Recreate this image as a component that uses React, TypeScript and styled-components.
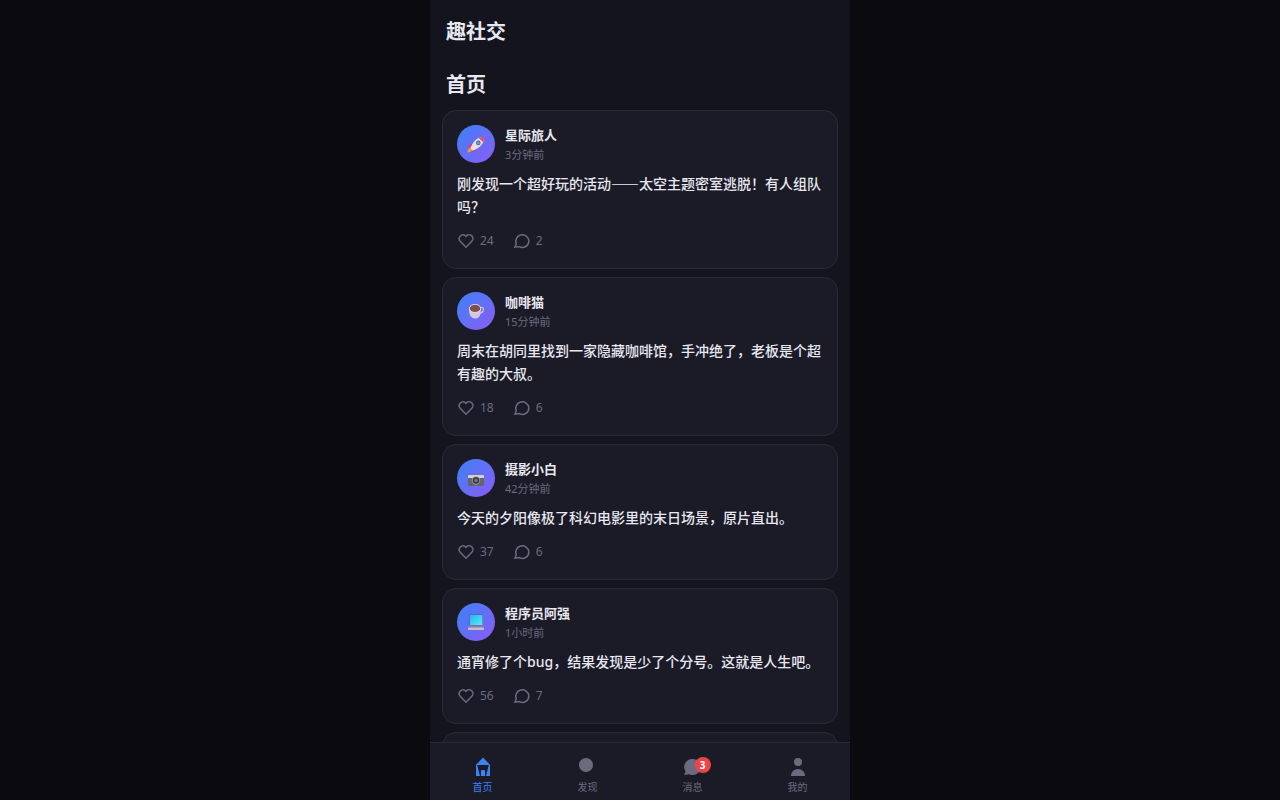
import React from 'react';
import styled, { createGlobalStyle } from 'styled-components';

const colors = {
  page: '#0a0a0f',
  shell: '#14141e',
  card: '#1b1a27',
  border: '#2a2a3a',
  text: '#e8e8f0',
  muted: '#6b6b80',
  accent: '#3b82f6',
  violet: '#8b5cf6',
  danger: '#ef4444',
};

const GlobalStyle = createGlobalStyle`
  *, *::before, *::after { box-sizing: border-box; }
  body {
    margin: 0;
    background: ${colors.page};
    color: ${colors.text};
    font-family: "Noto Sans", "Noto Sans CJK SC", sans-serif;
  }
  button { font: inherit; border: 0; background: none; cursor: pointer; }
`;

const Shell = styled.div`
  display: flex;
  flex-direction: column;
  width: 100%;
  max-width: 420px;
  height: 100vh;
  margin: 0 auto;
  background: ${colors.shell};
`;

const Header = styled.header`
  padding: 16px;
`;

const Brand = styled.h1`
  margin: 0;
  font-size: 20px;
  line-height: 32px;
  font-weight: 700;
`;

const Main = styled.main`
  flex: 1;
  min-height: 0;
  overflow-y: auto;
  scrollbar-width: none;
`;

const SectionTitle = styled.h2`
  margin: 0;
  padding: 5px 16px 9px;
  font-size: 20px;
  line-height: 32px;
  font-weight: 700;
`;

const Feed = styled.div`
  display: flex;
  flex-direction: column;
  gap: 8px;
  padding: 0 12px 12px;
`;

const Card = styled.article`
  min-height: 136px;
  padding: 14px;
  border: 1px solid ${colors.border};
  border-radius: 14px;
  background: ${colors.card};
`;

const CardHead = styled.div`
  display: flex;
  align-items: flex-start;
  gap: 10px;
  margin-bottom: 7px;
`;

const Avatar = styled.span`
  display: flex;
  align-items: center;
  justify-content: center;
  width: 38px;
  height: 38px;
  border-radius: 50%;
  background: linear-gradient(135deg, ${colors.accent}, ${colors.violet});
`;

const Author = styled.div`
  font-size: 13px;
  line-height: 20px;
  font-weight: 600;
`;

const Time = styled.div`
  font-size: 11px;
  line-height: 20px;
  color: ${colors.muted};
`;

/* Long dashes join up only when the CJK face comes first in the stack. */
const Content = styled.p<{ $cjkDashes: boolean }>`
  margin: 0;
  font-size: 14px;
  line-height: 23px;
  font-weight: 500;
  font-family: ${({ $cjkDashes }) =>
    $cjkDashes ? '"Noto Sans CJK SC", sans-serif' : 'inherit'};
`;

const Actions = styled.div`
  display: flex;
  gap: 19px;
  margin-top: 10px;
  padding-bottom: 1px;
`;

const Action = styled.button`
  display: flex;
  align-items: center;
  gap: 5px;
  padding: 4px 0;
  color: ${colors.muted};
  && { font-size: 12px; line-height: 17px; }

  svg { flex: none; margin: -1px 0; }
`;

const Nav = styled.nav`
  display: flex;
  height: 58px;
  border-top: 1px solid ${colors.border};
  background: ${colors.card};
`;

const NavItem = styled.button<{ $active?: boolean }>`
  flex: 1;
  display: flex;
  flex-direction: column;
  align-items: center;
  justify-content: center;
  gap: 1px;
  padding: 7px 0 0;
  color: ${({ $active }) => ($active ? colors.accent : colors.muted)};
  && { font-size: 10px; line-height: 16px; }
`;

const NavIcon = styled.span`
  position: relative;
  display: flex;
`;

const Badge = styled.span`
  position: absolute;
  top: 1px;
  right: -7px;
  width: 16px;
  height: 16px;
  border-radius: 50%;
  background: ${colors.danger};
  color: #fff;
  font-size: 10px;
  line-height: 16px;
  font-weight: 700;
  text-align: center;
`;

const HeartIcon = () => (
  <svg width="18" height="18" viewBox="0 0 24 24" fill="none" stroke="currentColor" strokeWidth="2" aria-hidden="true">
    <path d="M19.700 5.200a5.100 5.100 0 0 0-7.200 0L12 5.800l-.5-.6a5.100 5.100 0 0 0-7.200 7.200L12 20.300l7.700-7.900a5.100 5.100 0 0 0 0-7.200z" />
  </svg>
);

const CommentIcon = () => (
  <svg width="18" height="18" viewBox="0 0 24 24" fill="none" stroke="currentColor" strokeWidth="2" aria-hidden="true">
    <path d="M21.200 11.700a8.800 8.800 0 0 1-13 7.800L2.500 20.200l1.800-4.300A8.800 8.800 0 1 1 21.200 11.700z" />
  </svg>
);

const avatarDrawings = {
  rocket: (
    <>
      <path d="M6.500 8 2.500 9.500 1 13l4-.5zM10 12l-1.500 4L5 17.500l.5-4.500z" fill="#e0405e" />
      <path d="M3 13c-1.500.5-2.500 2-2.500 4.500C3 17.500 4.500 16.500 5 15z" fill="#f59a3c" />
      <path d="M17 2c-4.500-.3-8.700 1.800-11.700 7.300L3.300 13.300l2.400 2.400L9.700 13.700C15.200 10.700 17.300 6.500 17 2z" fill="#e6dfe9" />
      <path d="M17 2c-1.900-.1-3.600.2-5.200.9l4.300 4.300c.7-1.600 1-3.300.9-5.200z" fill="#ec4664" />
      <circle cx="11.300" cy="7.900" r="2.300" fill="#5b6480" />
      <circle cx="11.300" cy="7.900" r="1.500" fill="#4fa3e8" />
    </>
  ),
  coffee: (
    <>
      <path d="M13 6c2.300-1.500 4 0 3.300 2.300-.6 1.800-2 3-4 3.200" fill="none" stroke="#cfc3d2" strokeWidth="1.300" />
      <path d="M2 6.500c0 4.500.5 7 3 9 2.300 1.700 5.500 1.300 7.200-.7 1.600-2 1.800-5 1.600-8.300z" fill="#d5c9d6" />
      <ellipse cx="8" cy="6.200" rx="6" ry="4.300" fill="#e9e1ea" />
      <ellipse cx="8" cy="6.400" rx="5.200" ry="3.600" fill="#80504c" />
    </>
  ),
  camera: (
    <>
      <path d="M2 5.500h3v1H2zM6 6l1-1h4l1 1z" fill="#77737f" />
      <rect x="1" y="6" width="16" height="11" rx="1" fill="#66626e" />
      <path d="M1 7a1 1 0 0 1 1-1h14a1 1 0 0 1 1 1v2H1z" fill="#d6d2da" />
      <circle cx="9" cy="11.500" r="4.200" fill="#a09ca8" />
      <circle cx="9" cy="11.500" r="3.300" fill="#3b3843" />
      <circle cx="9" cy="11.500" r="1.700" fill="#6d7798" />
    </>
  ),
  laptop: (
    <>
      <defs>
        <linearGradient id="laptop-screen" x1="0" y1="0" x2="1" y2="1">
          <stop offset="0" stopColor="#22b8ee" />
          <stop offset="1" stopColor="#5ceaf8" />
        </linearGradient>
      </defs>
      <rect x="2.500" y="1.500" width="13.500" height="11" rx="1" fill="#4b5f8c" />
      <rect x="3" y="2" width="12.500" height="10" fill="url(#laptop-screen)" />
      <path d="M3 12.500h12.500l1.500 3H1z" fill="#8d7f9c" />
      <path d="M1 14.500h16V16a1 1 0 0 1-1 1H2a1 1 0 0 1-1-1z" fill="#c6bccf" />
    </>
  ),
};

const navShapes = {
  home: (
    <>
      <path d="M11 1.500 18.200 9H3.800z" />
      <path d="M4 9h1.200L8 20H4zM18 9h-1.200L14 20h4z" />
      <path d="M9 20v-5a1 1 0 0 1 1-1h2a1 1 0 0 1 1 1v5z" />
    </>
  ),
  discover: <circle cx="9" cy="9" r="7" />,
  messages: <path d="M11 3a8 8 0 1 1-3.600 15.200L2 19l1.600-3.600A8 8 0 0 1 11 3z" />,
  profile: (
    <>
      <circle cx="11" cy="6" r="4" />
      <path d="M4 20c0-4 3-7 7-7s7 3 7 7z" />
    </>
  ),
};

type NavName = keyof typeof navShapes;
type AvatarName = keyof typeof avatarDrawings;

const navItems: { name: NavName; label: string; badge?: number }[] = [
  { name: 'home', label: '首页' },
  { name: 'discover', label: '发现' },
  { name: 'messages', label: '消息', badge: 3 },
  { name: 'profile', label: '我的' },
];

const posts: { avatar: AvatarName; author: string; time: string; content: string; likes: number; comments: number }[] = [
  { avatar: 'rocket', author: '星际旅人', time: '3分钟前', content: '刚发现一个超好玩的活动——太空主题密室逃脱！有人组队吗？', likes: 24, comments: 2 },
  { avatar: 'coffee', author: '咖啡猫', time: '15分钟前', content: '周末在胡同里找到一家隐藏咖啡馆，手冲绝了，老板是个超有趣的大叔。', likes: 18, comments: 6 },
  { avatar: 'camera', author: '摄影小白', time: '42分钟前', content: '今天的夕阳像极了科幻电影里的末日场景，原片直出。', likes: 37, comments: 6 },
  { avatar: 'laptop', author: '程序员阿强', time: '1小时前', content: '通宵修了个bug，结果发现是少了个分号。这就是人生吧。', likes: 56, comments: 7 },
];

export default function App() {
  return (
    <>
      <GlobalStyle />
      <Shell lang="zh-CN">
        <Header>
          <Brand>趣社交</Brand>
        </Header>
        <Main>
          <SectionTitle>首页</SectionTitle>
          <Feed>
            {posts.map((post) => (
              <Card key={post.author}>
                <CardHead>
                  <Avatar>
                    <svg width="18" height="18" viewBox="0 0 18 18" aria-hidden="true">
                      {avatarDrawings[post.avatar]}
                    </svg>
                  </Avatar>
                  <div>
                    <Author>{post.author}</Author>
                    <Time>{post.time}</Time>
                  </div>
                </CardHead>
                <Content $cjkDashes={post.content.includes('——')}>{post.content}</Content>
                <Actions>
                  <Action type="button" aria-label={`点赞 ${post.likes}`}>
                    <HeartIcon />
                    {post.likes}
                  </Action>
                  <Action type="button" aria-label={`评论 ${post.comments}`}>
                    <CommentIcon />
                    {post.comments}
                  </Action>
                </Actions>
              </Card>
            ))}
            <Card aria-busy="true" />
          </Feed>
        </Main>
        <Nav>
          {navItems.map(({ name, label, badge }) => (
            <NavItem key={name} type="button" $active={name === 'home'}>
              <NavIcon>
                <svg width="22" height="22" viewBox="0 0 22 22" fill="currentColor" aria-hidden="true">
                  {navShapes[name]}
                </svg>
                {badge && <Badge>{badge}</Badge>}
              </NavIcon>
              {label}
            </NavItem>
          ))}
        </Nav>
      </Shell>
    </>
  );
}
